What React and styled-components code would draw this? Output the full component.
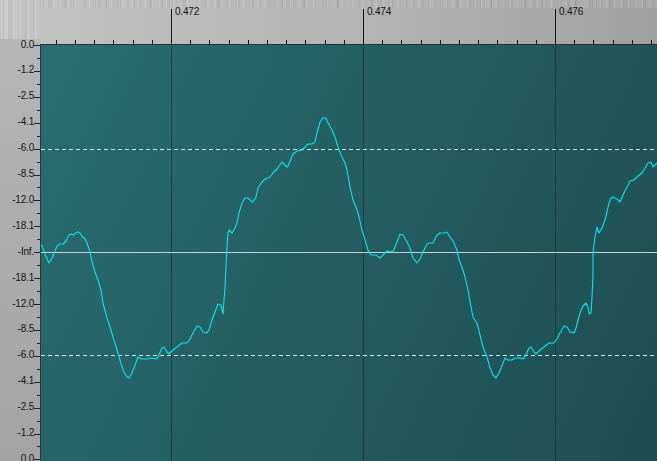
import React from 'react';
import styled, { createGlobalStyle } from 'styled-components';

const GlobalStyle = createGlobalStyle`
  html, body {
    margin: 0;
    padding: 0;
    overflow: hidden;
    background: #1f4d52;
  }
  body {
    font-family: "Liberation Sans", Arial, sans-serif;
  }
`;

const brushed = `
  repeating-linear-gradient(90deg, rgba(255,255,255,0.1) 0 1px, transparent 1px 3px, rgba(0,0,0,0.035) 3px 4px, transparent 4px 7px),
  repeating-linear-gradient(90deg, rgba(0,0,0,0.045) 0 1px, transparent 1px 5px, rgba(255,255,255,0.07) 5px 6px, transparent 6px 11px),
  repeating-linear-gradient(90deg, transparent 0 8px, rgba(0,0,0,0.045) 8px 10px, transparent 10px 17px),
  repeating-linear-gradient(90deg, transparent 0 13px, rgba(255,255,255,0.06) 13px 14px, transparent 14px 23px)
`;

const PX_PER_MAJOR = 192;
const FIRST_MAJOR_X = 171;
const MAJORS = [
  { x: 171, label: '0.472' },
  { x: 363, label: '0.474' },
  { x: 555, label: '0.476' },
];

const DB_LABELS = [
  '0.0', '-1.2', '-2.5', '-4.1', '-6.0', '-8.5', '-12.0', '-18.1', '-Inf.',
  '-18.1', '-12.0', '-8.5', '-6.0', '-4.1', '-2.5', '-1.2', '0.0',
];
const DB_TOP = 45;
const DB_STEP = 25.9;

const WAVE = [
  [40, 243], [42, 246], [45, 254], [49, 263], [52, 258], [55, 251], [57, 246], [60, 244], [63, 244],
  [66, 241], [68, 237], [70, 234], [73, 235], [76, 233], [78, 232], [80, 233], [82, 236], [85, 239],
  [87, 243], [90, 252], [92, 262], [95, 272], [98, 280], [101, 290], [103, 303], [107, 318], [110, 327],
  [113, 337], [117, 350], [120, 360], [123, 370], [127, 377], [129, 378], [132, 373], [135, 365],
  [138, 357], [142, 359], [147, 359], [152, 358], [156, 359], [158, 357], [162, 348], [164, 347],
  [167, 352], [169, 354], [173, 350], [177, 347], [182, 343], [187, 343], [190, 339], [193, 333],
  [197, 326], [200, 327], [203, 332], [207, 333], [209, 330], [212, 320], [215, 312], [218, 304],
  [221, 305], [223, 314], [224, 300], [225, 287], [226, 265], [227, 247], [228, 233], [229, 230],
  [232, 233], [235, 228], [237, 223], [239, 213], [242, 203], [245, 198], [248, 198], [252, 202],
  [253, 202], [256, 197], [258, 188], [262, 182], [265, 179], [270, 177], [273, 173], [277, 169],
  [282, 162], [283, 163], [287, 167], [288, 166], [291, 159], [293, 154], [297, 151], [302, 150],
  [305, 147], [308, 144], [312, 144], [315, 142], [317, 133], [320, 122], [323, 118], [326, 118],
  [328, 123], [332, 130], [335, 137], [338, 147], [342, 157], [345, 163], [347, 170], [350, 187],
  [353, 200], [357, 210], [359, 217], [362, 230], [365, 240], [368, 250], [371, 255], [376, 255],
  [380, 258], [383, 255], [387, 251], [393, 252], [397, 242], [400, 234], [403, 235], [407, 242],
  [410, 248], [413, 258], [417, 263], [420, 259], [423, 252], [427, 244], [430, 243], [433, 243],
  [437, 235], [440, 233], [445, 233], [447, 232], [450, 237], [453, 241], [457, 250], [459, 260],
  [462, 267], [465, 277], [468, 290], [471, 307], [473, 317], [477, 323], [480, 335], [483, 347],
  [487, 357], [490, 368], [493, 375], [496, 378], [499, 373], [503, 363], [505, 358], [508, 360],
  [512, 360], [515, 358], [520, 358], [523, 359], [525, 357], [529, 348], [531, 347], [534, 352],
  [536, 354], [540, 350], [544, 347], [549, 343], [554, 343], [557, 339], [560, 333], [564, 326],
  [567, 327], [570, 332], [574, 333], [576, 328], [578, 320], [580, 313], [583, 306], [586, 303],
  [588, 307], [589, 314], [591, 313], [592, 297], [593, 275], [593, 253], [595, 237], [597, 227],
  [599, 233], [602, 228], [605, 220], [607, 212], [609, 203], [611, 198], [613, 197], [617, 199],
  [620, 202], [623, 195], [627, 187], [630, 181], [634, 180], [638, 176], [642, 173], [645, 168],
  [648, 163], [651, 162], [653, 167], [655, 165], [657, 163],
];

const Editor = styled.div`
  display: grid;
  grid-template-columns: 40px 1fr;
  grid-template-rows: 44px 1fr;
  width: 657px;
  height: 461px;
  overflow: hidden;
`;

const Corner = styled.div`
  background: ${brushed}, linear-gradient(90deg, #c9c9c9, #c3c3c3);
  background-size: 100% 39px;
  background-repeat: no-repeat;
  background-color: #b6b6b6;
`;

const TopRuler = styled.div`
  position: relative;
  background: ${brushed}, linear-gradient(90deg, #c2c2c2, #b3b3b3 60%, #a8a8a8);
  background-size: 100% 8px;
  background-repeat: no-repeat;
  background-color: #b0b0b0;
  &::before {
    content: '';
    position: absolute;
    inset: 8px 0 0 0;
    background: linear-gradient(90deg, #c1c1c1 0%, #b5b5b5 50%, #a0a0a0 100%);
  }
`;

const LeftRuler = styled.div`
  position: relative;
  z-index: 1;
  background: linear-gradient(180deg, #b5b5b5 0%, #aaaaaa 60%, #a3a3a3 100%);
`;

const RulerMarks = styled.svg`
  position: absolute;
  top: 0;
  left: 0;
  display: block;
`;

const TimeLabel = styled.span`
  position: absolute;
  top: 6px;
  font-size: 10px;
  line-height: 11px;
  letter-spacing: -0.2px;
  color: #161616;
  white-space: nowrap;
`;

const DbLabel = styled.span`
  position: absolute;
  right: 6px;
  font-size: 10px;
  line-height: 12px;
  letter-spacing: -0.2px;
  color: #161616;
  white-space: nowrap;
`;

const Canvas = styled.div`
  position: relative;
  border-left: 1px solid #353535;
  border-top: 1px solid #2c2c2c;
  background: linear-gradient(115deg, #296d72 0%, #245e63 45%, #1e4d52 100%);
`;

const WaveDrawing = styled.svg`
  position: absolute;
  top: 0;
  left: 0;
  display: block;
`;

function topTicks() {
  const ticks = [];
  for (let k = -8; k < 40; k += 1) {
    const x = FIRST_MAJOR_X + (PX_PER_MAJOR / 10) * k;
    if (x <= 41 || x > 657) continue;
    const px = Math.round(x) + 0.5;
    const major = k % 10 === 0;
    ticks.push(
      <line key={k} x1={px} x2={px} y1={major ? 9 : 40} y2={44} stroke="#141414" strokeWidth="1" />
    );
  }
  return ticks;
}

function leftTicks() {
  const ticks = [];
  DB_LABELS.forEach((_, i) => {
    const y = Math.round(DB_TOP + DB_STEP * i) + 0.5;
    ticks.push(<line key={`M${i}`} x1={34} x2={40} y1={y} y2={y} stroke="#222" />);
    if (i < DB_LABELS.length - 1) {
      const m = Math.round(DB_TOP + DB_STEP * (i + 0.5)) + 0.5;
      ticks.push(<line key={`m${i}`} x1={37} x2={40} y1={m} y2={m} stroke="#222" />);
    }
  });
  return ticks;
}

const App = () => (
  <>
    <GlobalStyle />
    <Editor>
      <Corner />
      <TopRuler>
        <RulerMarks width="617" height="44" viewBox="40 0 617 44" shapeRendering="crispEdges">
          {topTicks()}
        </RulerMarks>
        {MAJORS.map((m) => (
          <TimeLabel key={m.label} style={{ left: m.x - 40 + 4 }}>
            {m.label}
          </TimeLabel>
        ))}
      </TopRuler>
      <LeftRuler>
        <RulerMarks width="40" height="417" viewBox="0 44 40 417" shapeRendering="crispEdges">
          {leftTicks()}
        </RulerMarks>
        {DB_LABELS.map((label, i) => (
          <DbLabel key={i} style={{ top: DB_TOP + DB_STEP * i - 44 - 6.5 }}>
            {label}
          </DbLabel>
        ))}
      </LeftRuler>
      <Canvas>
        <WaveDrawing width="616" height="416" viewBox="41 45 616 416">
          <g shapeRendering="crispEdges">
            {MAJORS.map((m) => (
              <line
                key={m.x}
                x1={m.x + 0.5}
                x2={m.x + 0.5}
                y1={45}
                y2={461}
                stroke="rgba(12, 38, 40, 0.55)"
              />
            ))}
            <line x1={41} x2={657} y1={149.5} y2={149.5} stroke="#d2e2e2" strokeDasharray="4 3" />
            <line x1={41} x2={657} y1={355.5} y2={355.5} stroke="#d2e2e2" strokeDasharray="4 3" />
            <line x1={41} x2={657} y1={252.5} y2={252.5} stroke="#cfcfcf" />
          </g>
          <polyline
            points={WAVE.map(([x, y]) => `${x},${y}`).join(' ')}
            fill="none"
            stroke="#00e8e8"
            strokeWidth="1.1"
            strokeLinejoin="round"
          />
        </WaveDrawing>
      </Canvas>
    </Editor>
  </>
);

export default App;
